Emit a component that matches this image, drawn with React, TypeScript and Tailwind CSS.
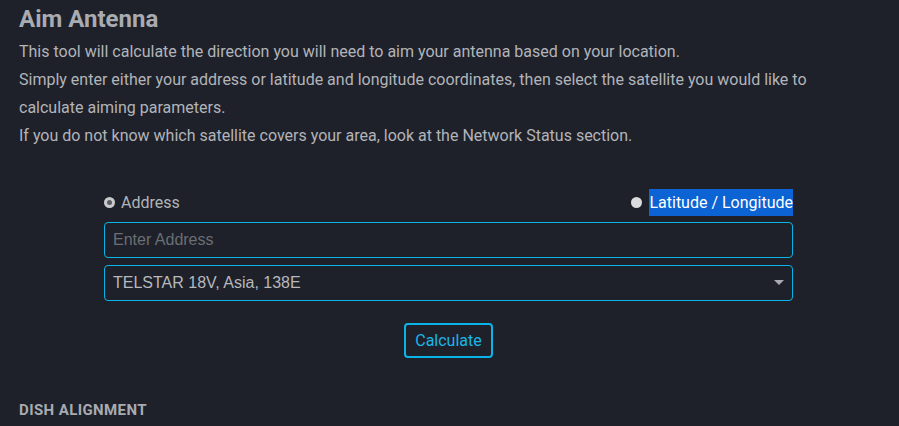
import React from "react";

export default function App() {
  return (
    <div className="min-h-[426px] w-full bg-[#1e2129] px-[19px] pt-[4px]" style={{ fontFamily: "Roboto, 'Noto Sans', sans-serif" }}>
      <h1 className="text-[24px] font-bold leading-[30px] text-[#a8abb2]">Aim Antenna</h1>
      <div className="mt-[4px] max-w-[830px] text-[16px] leading-[28px] text-[#b2b4ba]">
        <p>This tool will calculate the direction you will need to aim your antenna based on your location.</p>
        <p>Simply enter either your address or latitude and longitude coordinates, then select the satellite you would like to calculate aiming parameters.</p>
        <p>If you do not know which satellite covers your area, look at the Network Status section.</p>
      </div>
      <div className="ml-[85px] mt-[39px] w-[689px]">
        <div className="flex items-center justify-between">
          <label className="flex items-center gap-[6px] text-[16px] leading-[27px] text-[#b2b4ba]">
            <span className="flex h-[11px] w-[11px] items-center justify-center rounded-full bg-[#c9cacd]">
              <span className="h-[5px] w-[5px] rounded-full bg-[#5a5c60]" />
            </span>
            Address
          </label>
          <label className="flex items-center gap-[7px] text-[16px] leading-[27px]">
            <span className="h-[11px] w-[11px] rounded-full bg-[#dcdcde]" />
            <span className="bg-[#0b63d4] text-white">Latitude / Longitude</span>
          </label>
        </div>
        <div className="mt-[6px] flex h-[36px] items-center rounded-[4px] border border-[#0bb4e8] px-[8px]" style={{ fontFamily: "'Liberation Sans', Arial, sans-serif" }}>
          <span className="text-[16px] text-[#6b6e75]">Enter Address</span>
        </div>
        <div className="mt-[7px] flex h-[36px] items-center justify-between rounded-[4px] border border-[#0bb4e8] pl-[8px] pr-[8px]" style={{ fontFamily: "'Liberation Sans', Arial, sans-serif" }}>
          <span className="text-[16px] text-[#b6b8bd]">TELSTAR 18V, Asia, 138E</span>
          <svg width="10" height="6" viewBox="0 0 10 6"><path d="M0 0 L10 0 L5 5 Z" fill="#a9abb1" /></svg>
        </div>
        <div className="mt-[22px] flex justify-center">
          <button className="h-[35px] rounded-[4px] border-2 border-[#0bb4e8] px-[9px] text-[16px] text-[#19b6e8]">Calculate</button>
        </div>
      </div>
      <h2 className="mt-[41px] text-[15px] font-bold tracking-[0.4px] text-[#a8abb2]">DISH ALIGNMENT</h2>
    </div>
  );
}
